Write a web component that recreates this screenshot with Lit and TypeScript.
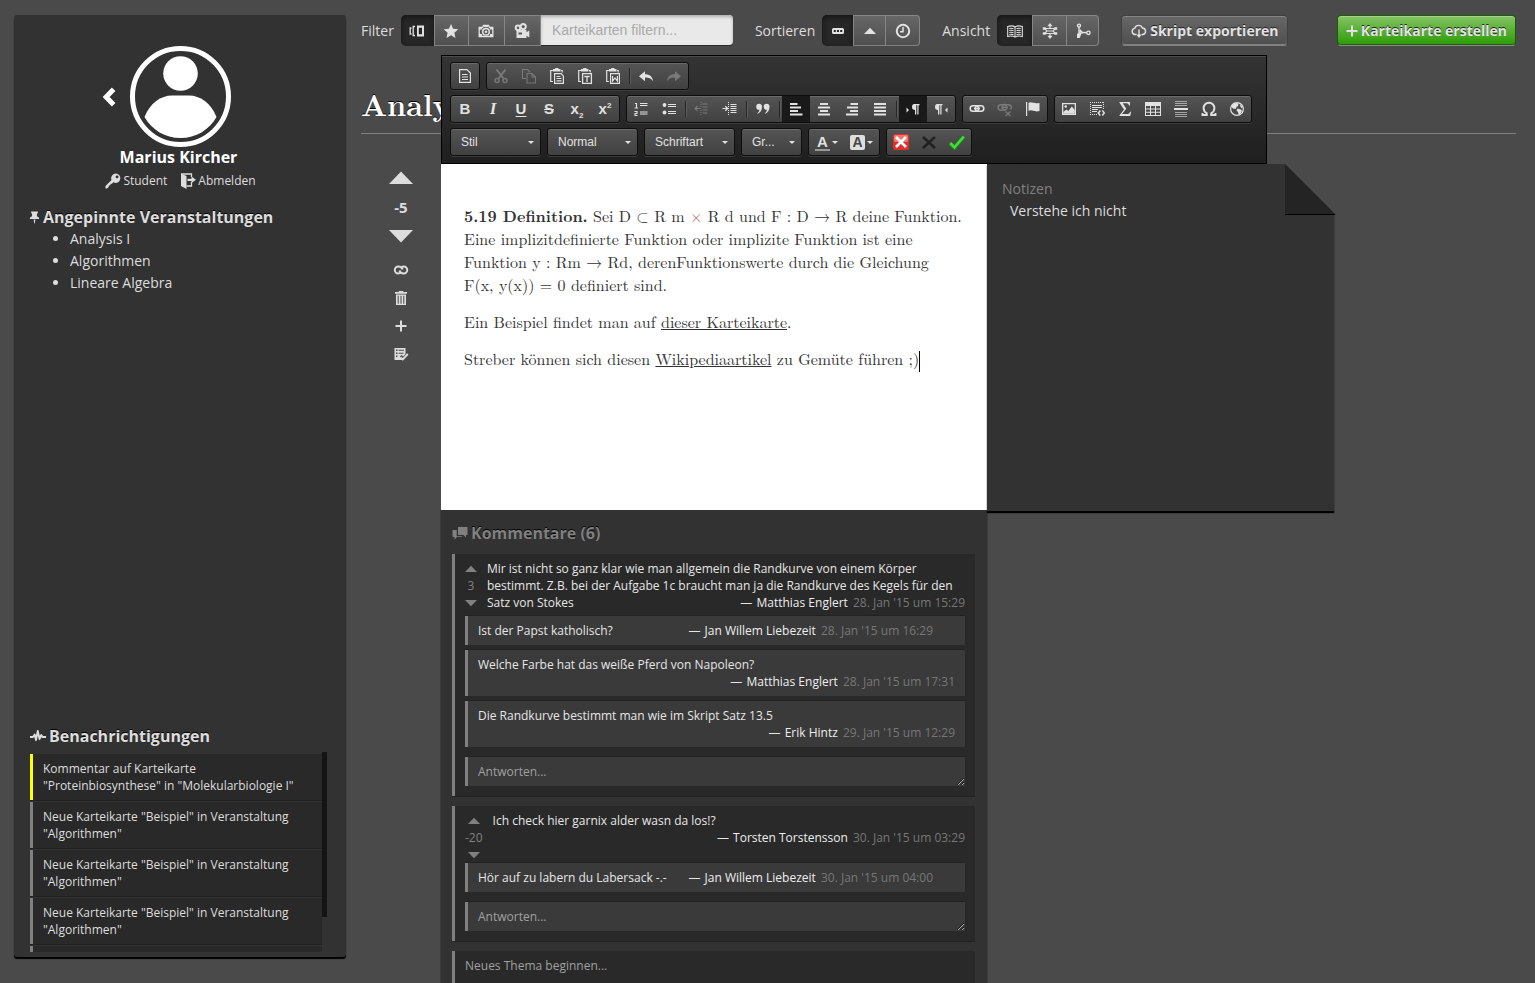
import { LitElement, html, svg, css, nothing } from "lit";
import { customElement, property } from "lit/decorators.js";
import { classMap } from "lit/directives/class-map.js";

const glyphs: Record<string, unknown> = {
  cards: svg`<path d="M8 2.500h7v11H8zM9.800 4.700v6.600h3.200V4.700z" fill-rule="evenodd" fill="currentColor"/><path d="M6 3.500H4.200v9H6M2.500 5H1.200v6h1.300" fill="none" stroke="currentColor" stroke-width="1.300"/>`,
  star: svg`<path fill="currentColor" d="M8 1l2.100 4.800 5.200.500-3.900 3.500 1.100 5.200L8 12.300 3.500 15l1.100-5.200L.700 6.300l5.200-.500z"/>`,
  camera: svg`<path fill="none" stroke="currentColor" stroke-width="1.300" d="M1.200 4.300h3.400l1-2h4.800l1 2h3.400v9.200H1.200z"/><path fill="currentColor" d="M1 4h3v2.500H1zM12 4h3v2.500h-3zM1 11h3v2.500H1zM12 11h3v2.500h-3zM5.800 2h4.400v2H5.800z"/><circle cx="8" cy="8.800" r="3.300" fill="none" stroke="currentColor" stroke-width="1.500"/><circle cx="8" cy="8.800" r="1.300" fill="currentColor"/>`,
  film: svg`<g fill="none" stroke="currentColor" stroke-width="1.900"><circle cx="4" cy="4.800" r="2.300"/><circle cx="9.200" cy="3.600" r="2.600"/></g><path fill="currentColor" fill-rule="evenodd" d="M2.500 7h10v2.200l2.800-1.700V14.500l-2.800-1.700V15h-10zM4.500 9.500v2H8v-2z"/>`,
  dots: svg`<path fill="currentColor" fill-rule="evenodd" d="M3.500 5h9A1.500 1.500 0 0 1 14 6.500v3a1.500 1.500 0 0 1-1.500 1.500h-9A1.500 1.500 0 0 1 2 9.500v-3A1.500 1.500 0 0 1 3.500 5zM3.800 7v2h2V7zM7 7v2h2V7zM10.200 7v2h2V7z"/>`,
  up: svg`<path fill="currentColor" d="M8 4.800L14 11H2z"/>`,
  down: svg`<path fill="currentColor" d="M2 5h12l-6 6.200z"/>`,
  clock: svg`<circle cx="8" cy="8" r="6.200" fill="none" stroke="currentColor" stroke-width="2"/><path d="M8 4v4.700H5" fill="none" stroke="currentColor" stroke-width="1.500"/>`,
  book: svg`<path fill="none" stroke="currentColor" stroke-width="1.100" d="M8 4C6.500 2.800 3 2.800.700 3.500v10c2.500-.700 5.500-.500 7.300.600 1.800-1.100 4.800-1.300 7.300-.6v-10C13 2.800 9.500 2.800 8 4zM8 4v10M2.300 5.500c1.500-.300 3-.2 4.200.3M2.300 7.500c1.500-.3 3-.2 4.200.3M2.300 9.500c1.500-.3 3-.2 4.200.3M2.300 11.500c1.500-.3 3-.2 4.200.3M13.700 5.500c-1.500-.3-3-.2-4.200.3M13.700 7.500c-1.500-.3-3-.2-4.200.3M13.700 9.500c-1.500-.3-3-.2-4.200.3M13.700 11.500c-1.500-.3-3-.2-4.200.3"/>`,
  graph: svg`<g fill="none" stroke="currentColor" stroke-width="1.200"><path d="M8 2v3.500M8 10.500V14M2.500 5.500h11M2.500 10.500h11M3 5.700l1.800 2.300L3 10.300M13 5.700L11.200 8l1.800 2.300M4.800 8h6.400"/></g><path fill="currentColor" d="M8 0l2.600 3.200H5.400zM8 16l2.600-3.200H5.400zM.800 4.300h3v2.400h-3zM12.200 4.300h3v2.400h-3zM.800 9.300h3v2.400h-3zM12.200 9.300h3v2.400h-3z"/>`,
  branch: svg`<g fill="none" stroke="currentColor" stroke-width="1.400"><circle cx="4" cy="2.600" r="1.500"/><circle cx="13.400" cy="9.800" r="1.700"/><path d="M4 4v9M4.300 12.200C5 9 8 9.200 11.700 9.700"/></g><path fill="currentColor" d="M2 10.500h4.400L4.800 15H2zM5 6l3 3-4 1z"/>`,
  cloud: svg`<path fill="none" stroke="currentColor" stroke-width="1.400" d="M5.500 11.500H4A3.100 3.100 0 0 1 3.600 5.400 4.200 4.200 0 0 1 11.500 5 3.300 3.300 0 0 1 12 11.500h-1.500"/><path fill="currentColor" d="M7.300 6.500h1.400v5h2L8 15l-2.700-3.500h2z"/>`,
  plus: svg`<path fill="currentColor" d="M7 2.500h2V7h4.500v2H9v4.500H7V9H2.500V7H7z"/>`,
  chevron: svg`<path fill="none" stroke="currentColor" stroke-width="4" d="M12.500 1.800L6.500 8l6 6.200"/>`,
  key: svg`<path fill="currentColor" fill-rule="evenodd" d="M10.500.500a4.800 4.800 0 0 1 2.300 9 4.800 4.800 0 0 1-4.400-.2L7 10.700 5.500 11v1.300l-1.600.3-.2 1.400L2 15.500H.500V13l6-6A4.800 4.800 0 0 1 10.500.500zM12 2.500a1.400 1.400 0 1 0 .1 2.800A1.400 1.400 0 0 0 12 2.500z"/>`,
  exit: svg`<path fill="currentColor" d="M1 .500L6.500 3v13L1 13z"/><path fill="none" stroke="currentColor" stroke-width="1.300" d="M1 1h10.500v3M11.500 9v4H6.500"/><path fill="currentColor" d="M7.500 5.700h4V3.500L16 6.800l-4.500 3.300V8h-4z"/>`,
  pin: svg`<path fill="currentColor" d="M3.800.500h8.400v1.800L11 3.800v2.700c1.700.500 2.800 1.700 2.800 3.300H2.200c0-1.600 1.100-2.800 2.800-3.300V3.800L3.800 2.300zM7 10.500h2l-.600 5h-.8z"/>`,
  pulse: svg`<path fill="none" stroke="currentColor" stroke-width="1.900" stroke-linejoin="round" d="M0 9h3l1.700-2.500L6 12 7.800 3l1.700 8 1.800-4 1.200 2H16"/>`,
  link: svg`<g fill="none" stroke="currentColor" stroke-width="2"><path d="M9.500 7.500C9 5.600 7.300 4.500 5.300 4.500A3.500 3.500 0 1 0 5.300 11.500c1 0 1.700-.300 2.400-.900M6.500 8.500c.500 1.900 2.200 3 4.200 3a3.500 3.500 0 1 0 0-7c-1 0-1.700.300-2.400.9"/></g>`,
  trash: svg`<path fill="currentColor" fill-rule="evenodd" d="M2 2h3.800V1h4.400v1H14v1.700H2zM3 4.500h10V15H3zM4.700 5.800v7.900h1V5.800zM7.500 5.800v7.900h1V5.800zM10.300 5.800v7.900h1V5.800z"/>`,
  review: svg`<path fill="currentColor" fill-rule="evenodd" d="M1.500 2h11v6l-2.300 2.500-1.700-1.400-1.700 1.700 3 3.200H1.500zM3 3.500V5h1.500V3.500zM3 6.500V8h1.500V6.500zM3 9.500V11h1.500V9.500zM5.500 3.700v1h5.500v-1zM5.500 6.700v1h5v-1z"/><path fill="none" stroke="currentColor" stroke-width="1.900" d="M7.500 11.300l2.300 2.200 5-5.500"/>`,
  chat: svg`<path fill="currentColor" d="M6 2h9.500v8h-1.500v2.500L11.500 10H6z"/><path fill="currentColor" d="M.500 5h4.200v6.300h5.500V12H5l-2.500 2.500V12h-2z"/>`,
  doc: svg`<path fill="none" stroke="currentColor" stroke-width="1.200" d="M2.600 1.600h7.300l3.500 3.500v9.300H2.600zM5 6.500h5.500M5 9h6M5 11.500h6"/>`,
  cut: svg`<g fill="none" stroke="currentColor"><path stroke-width="2" d="M3.500 1.500l7 9M12.500 1.500l-7 9"/><circle cx="4" cy="12.500" r="2" stroke-width="1.500"/><circle cx="12" cy="12.500" r="2" stroke-width="1.500"/></g>`,
  copy: svg`<g fill="none" stroke="currentColor" stroke-width="1.100"><path d="M5 10.500H1.500v-9h5l2.500 2.500M6 5.500h5l3.500 3.500v6H6zM11 5.500V9h3.500"/></g>`,
  paste: svg`<path d="M4 2.500H1.700v11H4M12 2.500h1.200v2" fill="none" stroke="currentColor" stroke-width="1.200"/><path fill="currentColor" d="M4 1h1.800l.700-1h2.600l.700 1h1.700v2.500H4z"/><path d="M5.600 5.600h6.500l2.300 2.300v7.500H5.600z" fill="none" stroke="currentColor" stroke-width="1.200"/><path d="M7.500 8.500h4M7.500 10.500h5M7.500 12.800h5" stroke="currentColor" stroke-width="1.200"/>`,
  pastetext: svg`<path d="M4 2.500H1.700v11H4M12 2.500h1.200v2" fill="none" stroke="currentColor" stroke-width="1.200"/><path fill="currentColor" d="M4 1h1.800l.700-1h2.600l.700 1h1.700v2.500H4z"/><path d="M5.600 5.600h8.800v9.800H5.600zM7.300 8.500h5.400M10 8.500V14" fill="none" stroke="currentColor" stroke-width="1.300"/>`,
  pasteword: svg`<path d="M4 2.500H1.700v11H4M12 2.500h1.200v2" fill="none" stroke="currentColor" stroke-width="1.200"/><path fill="currentColor" d="M4 1h1.800l.700-1h2.600l.700 1h1.700v2.500H4z"/><path d="M5.600 5.600h8.800v9.800H5.600zM7.600 8v5l2.400-3 2.400 3V8" fill="none" stroke="currentColor" stroke-width="1.200"/>`,
  undo: svg`<path fill="currentColor" d="M1 8.200l6-5v3c5 0 7.500 2.300 8 7-1.700-2.600-4-3.600-8-3.600v3.600z"/>`,
  redo: svg`<path fill="currentColor" d="M15 8.200l-6-5v3c-5 0-7.500 2.300-8 7 1.700-2.600 4-3.600 8-3.600v3.600z"/>`,
  ol: svg`<path d="M7 2.500h7.500M7 4.500h7.500M7 11h7.500M7 13h7.500M2 2.500h1.500V7M1.500 7H5M1.500 10.500H4v2H2v2h2.500" fill="none" stroke="currentColor" stroke-width="1.100"/>`,
  ul: svg`<circle cx="3.500" cy="4" r="1.900" fill="currentColor"/><circle cx="3.500" cy="11.500" r="1.900" fill="currentColor"/><path d="M7 3.500h8M7 5.500h8M7 10.500h8M7 12.500h8" stroke="currentColor" stroke-width="1.100"/>`,
  outdent: svg`<path d="M8.500 3h5M8.500 6h5M8.500 9h5M8.500 12h5M1 7.500h5M3.500 5.200L1 7.500l2.500 2.300" fill="none" stroke="currentColor" stroke-width="1.200"/><path d="M7 1v13" stroke="currentColor" stroke-dasharray="1 1"/>`,
  indent: svg`<path d="M8.500 3.500h6M8.500 5.500h6M8.500 7.500h6M8.500 9.500h6M8.500 11.500h6M.500 7.500h5M3.300 5.200l2.400 2.300-2.400 2.300" fill="none" stroke="currentColor" stroke-width="1.200"/><path d="M6.500 1v14" stroke="currentColor" stroke-dasharray="1 1"/>`,
  quote: svg`<path fill="currentColor" d="M4 2.800a3 3 0 0 1 3 3.200c0 3.500-2 6-5 7 1.500-1.500 2.300-2.800 2.400-4.200A3 3 0 0 1 4 2.800zM11.500 2.800a3 3 0 0 1 3 3.200c0 3.500-2 6-5 7 1.500-1.500 2.300-2.800 2.400-4.200a3 3 0 0 1-.4-6z"/>`,
  left: svg`<path d="M2 3h7.500M2 6.500h11M2 10h8M2 13.500h12.500" stroke="currentColor" stroke-width="2"/>`,
  center: svg`<path d="M4 3h8M2 6.500h12M4 10h8M2 13.500h12" stroke="currentColor" stroke-width="2"/>`,
  right: svg`<path d="M6.500 3H14M3 6.500h11M6 10h8M2 13.500h12" stroke="currentColor" stroke-width="2"/>`,
  justify: svg`<path d="M2 3h12M2 6.500h12M2 10h12M2 13.500h12" stroke="currentColor" stroke-width="2"/>`,
  ltr: svg`<path fill="currentColor" d="M1.500 6.500v5L4 9zM8.500 3h6v1.200h-1V13.500h-1.200V4.200h-1V13.500H10V9C8 9 7 7.800 7 6s1-3 2-3z"/>`,
  rtl: svg`<path fill="currentColor" d="M14.500 6.500v5L12 9zM3.500 3h6v1.200h-1V13.500H7.300V4.200h-1V13.500H5V9C3 9 2 7.800 2 6s1-3 2-3z"/>`,
  chain: svg`<g fill="none" stroke="currentColor" stroke-width="1.600"><rect x="1.200" y="4.800" width="8.500" height="5.400" rx="2.700"/><rect x="6.300" y="4.800" width="8.500" height="5.400" rx="2.700"/></g><path d="M5 7.500h6" stroke="currentColor" stroke-width="1.500"/>`,
  unchain: svg`<g fill="none" stroke="currentColor" stroke-width="1.500"><rect x="1.200" y="3.800" width="8.500" height="5.400" rx="2.700"/><path d="M7 9A2.700 2.700 0 0 1 9 3.800h3a2.700 2.700 0 0 1 1.500 4.700M5 6.500h6M8.500 10.500l5 4.500M13.500 10.500l-5 4.500"/></g>`,
  flag: svg`<path fill="currentColor" d="M1 1h1.200v14H1zM3.500 2c3-2 5.500 1.300 11 0v8c-5.500 1.500-8-2-11 0z"/>`,
  image: svg`<path fill="currentColor" fill-rule="evenodd" d="M1 2h14v12H1zM2.300 3.300v9.400h11.400V3.300z"/><circle cx="4.700" cy="5.500" r="1.300" fill="currentColor"/><path fill="currentColor" d="M2.300 12.700V11l3-2.500 2 1.500 3.500-4.500 2.900 3.500v3.700z"/>`,
  embed: svg`<path fill="none" stroke="currentColor" stroke-dasharray="1 1" d="M1.500 1v13M1 1.500h14M14.500 1v7M1 13.500h8"/><path d="M3 4.500h10M3 6.500h10M3 8.500h6M3 10.500h5" stroke="currentColor" stroke-width="1.200"/><path fill="none" stroke="currentColor" stroke-width="1.500" d="M11.300 9.500L9.300 12l2 2.500M13.300 9.500l2 2.500-2 2.500"/>`,
  sigma: svg`<path fill="currentColor" d="M2.500 1h10.500v3.500h-1C11.500 3 11 2.300 9.500 2.300H5.700L9.300 7.800l-4.300 5.200h5.500c1.500 0 2-.7 2.600-2.200h1L13.200 15H2.500v-.8L7 8.500 2.500 1.700z"/>`,
  table: svg`<path fill="currentColor" fill-rule="evenodd" d="M0 1h16v14H0zM1 5v2.500h4V5zM6 5v2.500h4V5zM11 5v2.500h4V5zM1 8.500v2.200h4V8.500zM6 8.500v2.200h4V8.500zM11 8.500v2.200h4V8.500zM1 11.700V14h4v-2.300zM6 11.700V14h4v-2.300zM11 11.700V14h4v-2.300z"/>`,
  hr: svg`<path d="M2 .500h12M2 2.500h12M2 4.500h12M2 11.500h12M2 13.500h12M2 15.500h12" stroke="currentColor" opacity=".6"/><path d="M1 8h14" stroke="currentColor" stroke-width="2"/>`,
  omega: svg`<path fill="none" stroke="currentColor" stroke-width="1.900" d="M1.500 12v2h4.300v-1.700C3.500 11 2.600 9.300 2.600 7A5.200 5.200 0 0 1 8 1.800 5.200 5.200 0 0 1 13.400 7c0 2.300-.9 4-3.200 5.300V14h4.300v-2"/>`,
  globe: svg`<circle cx="8" cy="8" r="6.400" fill="none" stroke="currentColor" stroke-width="1.200"/><path fill="currentColor" d="M3 4l3.500-2 3 .500L9 5 7.500 6l-1 2L4 7.500 2.500 6zM8.500 7.500L12 8.500 13 10l-2 3-1.500.8L9 11 7.500 9.500zM11 3.500l2.500 2v2L11.500 6z"/>`,
  cancel: svg`<rect width="16" height="16" rx="2" fill="#e02f2a"/><rect x="1" y="1" width="14" height="7" rx="1" fill="#f0766f"/><path d="M3 3l10 10M13 3L3 13" stroke="#fff" stroke-width="2.600"/>`,
  close: svg`<path d="M2 3l12 11M14 3L2 14" stroke="#202020" stroke-width="2.400"/>`,
  check: svg`<path d="M1.200 9.500l4.300 4.300L14.800 3" fill="none" stroke="#168a16" stroke-width="4"/><path d="M1.200 9l4.300 4.300L14.800 2.500" fill="none" stroke="#43dc36" stroke-width="2.600"/>`,
};

const icon = (name: string, cls = "") =>
  html`<svg class="icon ${cls}" viewBox="0 0 16 16" aria-hidden="true">${glyphs[name]}</svg>`;

const shared = css`
  * { box-sizing: border-box; }
  .icon { width: 16px; height: 16px; display: block; flex: none; }
  button { font: inherit; color: inherit; border: 0; padding: 0; background: none; cursor: pointer; }
  a { color: inherit; }
  h1, h2, p, ul { margin: 0; padding: 0; }
`;

type Tool = { icon?: string; text?: string; cls?: string; label: string; on?: boolean; off?: boolean } | "|";
const t = (icon: string, label: string, more = {}): Tool => ({ icon, label, ...more });
const x = (text: string, cls: string, label: string): Tool => ({ text, cls, label });

@customElement("editor-toolbar")
class EditorToolbar extends LitElement {
  static styles = [shared, css`
    :host {
      display: flex; flex-direction: column; gap: 5px; width: max-content;
      padding: 6px 14px 7px 8px; border: 1px solid #000;
      background: linear-gradient(#343434, #1f1f1f); box-shadow: inset 0 1px 0 #4c4c4c;
      color: #e2e2e2; font: 12px/26px "Liberation Sans", Arial, sans-serif;
    }
    .row { display: flex; gap: 6px; }
    .group, .combo {
      display: flex; height: 28px; border: 1px solid #0e0e0e; border-radius: 3px;
      background: linear-gradient(#545454, #414141); box-shadow: inset 0 1px 0 #6a6a6a, 0 1px 0 #3c3c3c;
    }
    .tool { width: 28px; height: 26px; display: flex; align-items: center; justify-content: center; }
    .tool.on { background: #191919; }
    .tool.off { opacity: .3; }
    .tool.drop { width: 35px; gap: 2px; }
    .caret { border: 3px solid transparent; border-top-color: currentColor; border-bottom: 0; }
    .line { width: 1px; margin: 5px 2px; background: #262626; box-shadow: 1px 0 0 #5c5c5c; }
    .bold, .italic, .under, .strike, .sub, .sup { font: bold 15px/26px "Liberation Sans", Arial, sans-serif; }
    .italic { font: italic bold 17px/26px "Liberation Serif", serif; }
    .under { text-decoration: underline; text-underline-offset: 2px; }
    .strike { text-decoration: line-through; }
    .sub sub, .sup sup { font-size: 8px; line-height: 0; }
    .ink { font-weight: bold; font-size: 15px; line-height: 15px; border-bottom: 2px solid #999; padding: 0 2px; }
    .fill { font-weight: bold; font-size: 14px; line-height: 15px; color: #444; background: #dedede; border-radius: 2px; padding: 0 2px; }
    select {
      appearance: none; font: inherit; color: inherit; width: 91px; padding: 0 20px 0 10px; outline: 0;
    }
    .pick { position: relative; display: flex; }
    .pick .caret { position: absolute; right: 7px; top: 13px; pointer-events: none; }
    .narrow { width: 61px; }
  `];

  rows: Tool[][][] = [
    [
      [t("doc", "Vorlagen")],
      [t("cut", "Ausschneiden", { off: true }), t("copy", "Kopieren", { off: true }), t("paste", "Einfügen"), t("pastetext", "Als Text einfügen"), t("pasteword", "Aus Word einfügen"), "|", t("undo", "Rückgängig"), t("redo", "Wiederherstellen", { off: true })],
    ],
    [
      [x("B", "bold", "Fett"), x("I", "italic", "Kursiv"), x("U", "under", "Unterstrichen"), x("S", "strike", "Durchgestrichen"), x("x", "sub", "Tiefgestellt"), x("x", "sup", "Hochgestellt")],
      [t("ol", "Nummerierte Liste"), t("ul", "Liste"), "|", t("outdent", "Einzug verringern", { off: true }), t("indent", "Einzug erhöhen"), "|", t("quote", "Zitatblock"), "|",
        t("left", "Linksbündig", { on: true }), t("center", "Zentriert"), t("right", "Rechtsbündig"), t("justify", "Blocksatz"), "|", t("ltr", "Leserichtung links nach rechts", { on: true }), t("rtl", "Leserichtung rechts nach links")],
      [t("chain", "Link"), t("unchain", "Link entfernen", { off: true }), t("flag", "Anker")],
      [t("image", "Bild"), t("embed", "Platzhalter"), t("sigma", "Formel"), t("table", "Tabelle"), t("hr", "Horizontale Linie"), t("omega", "Sonderzeichen"), t("globe", "IFrame")],
    ],
  ];

  tool(b: Tool) {
    if (b === "|") return html`<span class="line"></span>`;
    return html`<button type="button" class=${classMap({ tool: true, on: !!b.on, off: !!b.off })} aria-label=${b.label} ?disabled=${b.off}>
      ${b.icon ? icon(b.icon) : html`<span class=${b.cls!}>${b.text}${b.cls === "sub" ? html`<sub>2</sub>` : b.cls === "sup" ? html`<sup>2</sup>` : nothing}</span>`}
    </button>`;
  }

  combo(value: string, label: string, narrow = false) {
    return html`<span class="pick"><select class="combo ${narrow ? "narrow" : ""}" aria-label=${label}><option>${value}</option></select><span class="caret"></span></span>`;
  }

  render() {
    return html`
      ${this.rows.map((r) => html`<div class="row">${r.map((g) => html`<div class="group">${g.map((b) => this.tool(b))}</div>`)}</div>`)}
      <div class="row">
        ${this.combo("Stil", "Stil")}${this.combo("Normal", "Format")}${this.combo("Schriftart", "Schriftart")}${this.combo("Gr...", "Größe", true)}
        <div class="group">
          <button type="button" class="tool drop" aria-label="Textfarbe"><span class="ink">A</span><span class="caret"></span></button>
          <button type="button" class="tool drop" aria-label="Hintergrundfarbe"><span class="fill">A</span><span class="caret"></span></button>
        </div>
        <div class="group">
          ${[["cancel", "Abbrechen"], ["close", "Schließen"], ["check", "Speichern"]].map(([n, l]) => html`<button type="button" class="tool" aria-label=${l}>${icon(n)}</button>`)}
        </div>
      </div>`;
  }
}

type Post = { text: string; author: string; date: string; own?: boolean };
type Thread = Post & { votes: number; replies: Post[] };

@customElement("comment-thread")
class CommentThread extends LitElement {
  @property({ attribute: false }) thread!: Thread;

  static styles = [shared, css`
    :host {
      display: block; border-left: 3px solid #808080; background: #292929; padding: 6px 10px 10px;
      box-shadow: 0 1px 0 #222; font: 12px/17px "Open Sans", sans-serif; color: #e6e6e6;
    }
    .head { display: flex; gap: 10px; }
    .vote { display: flex; flex-direction: column; align-items: center; margin-bottom: -5px; color: #808080; }
    .vote button { height: 17px; display: flex; align-items: center; margin: 0 -2px; }
    .body { flex: 1; min-width: 0; display: flow-root; }
    .by { float: right; margin-left: 12px; color: #777; }
    .name { color: #eee; margin: 0 2px 0 1px; }
    .dash { color: #e6e6e6; }
    .reply { display: flow-root; margin-top: 5px; padding: 6px 10px; border-left: 3px solid #808080; background: #3a3a3a; box-shadow: 0 -1px 0 #222; }
    .own .by { margin-right: 22px; }
    textarea {
      display: block; width: 100%; height: 29px; margin-top: 10px; padding: 6px 10px; border: 0; border-left: 3px solid #808080;
      background: #3a3a3a; box-shadow: 0 -1px 0 #222; color: #e6e6e6; font: inherit; outline: 0; overflow: hidden; border-radius: 0;
    }
    textarea::placeholder { color: #a0a0a0; opacity: 1; }
  `];

  by = (p: Post) => html`<span class="by"><span class="dash">—</span> <span class="name">${p.author}</span> ${p.date}</span>`;

  render() {
    const c = this.thread;
    return html`
      <div class="head">
        <div class="vote">
          <button type="button" aria-label="Hoch">${icon("up")}</button><span>${c.votes}</span><button type="button" aria-label="Runter">${icon("down")}</button>
        </div>
        <div class="body">${c.text} ${this.by(c)}</div>
      </div>
      ${c.replies.map((r) => html`<div class=${classMap({ reply: true, own: !!r.own })}>${r.text} ${this.by(r)}</div>`)}
      <textarea placeholder="Antworten..." aria-label="Antworten"></textarea>`;
  }
}

const threads: Thread[] = [
  {
    votes: 3, text: "Mir ist nicht so ganz klar wie man allgemein die Randkurve von einem Körper bestimmt. Z.B. bei der Aufgabe 1c braucht man ja die Randkurve des Kegels für den Satz von Stokes",
    author: "Matthias Englert", date: "28. Jan '15 um 15:29",
    replies: [
      { text: "Ist der Papst katholisch?", author: "Jan Willem Liebezeit", date: "28. Jan '15 um 16:29", own: true },
      { text: "Welche Farbe hat das weiße Pferd von Napoleon?", author: "Matthias Englert", date: "28. Jan '15 um 17:31" },
      { text: "Die Randkurve bestimmt man wie im Skript Satz 13.5", author: "Erik Hintz", date: "29. Jan '15 um 12:29" },
    ],
  },
  {
    votes: -20, text: "Ich check hier garnix alder wasn da los!?", author: "Torsten Torstensson", date: "30. Jan '15 um 03:29",
    replies: [{ text: "Hör auf zu labern du Labersack -.-", author: "Jan Willem Liebezeit", date: "30. Jan '15 um 04:00", own: true }],
  },
];

@customElement("app-root")
class AppRoot extends LitElement {
  static styles = [shared, css`
    :host {
      box-sizing: border-box; display: flex; gap: 15px; height: 100vh; padding: 15px 19px 0 14px; overflow: hidden; background: #4a4a4a;
      color: #ddd; font: 14px/22px "Open Sans", sans-serif;
    }
    .side {
      flex: none; width: 332px; margin-bottom: 26px; padding: 31px 15px 5px 16px; display: flex; flex-direction: column;
      background: #323232; border-radius: 3px; box-shadow: 0 2px 1px #000;
    }
    .profile { display: grid; grid-template-columns: 1fr auto 1fr; align-items: center; column-gap: 12px; }
    .back { justify-self: end; color: #fff; }
    .back .icon { width: 20px; height: 20px; }
    .avatar { width: 101px; height: 101px; display: block; }
    .user { text-align: center; color: #fff; font-weight: bold; font-size: 16px; line-height: 20px; padding-right: 4px; }
    .links { display: flex; justify-content: center; gap: 13px; margin: 4px 0 14px; font-size: 12px; line-height: 20px; }
    .links a { display: flex; align-items: center; gap: 2px; text-decoration: none; }
    h2 { display: flex; align-items: center; font-size: 16px; line-height: 24px; text-shadow: 0 -1px 0 #000; }
    .pinned .icon { width: 13px; height: 15px; margin-left: -2px; margin-right: 2px; }
    .courses { padding-left: 40px; flex: 1; margin-top: -1px; }
    .courses a { text-decoration: none; }
    .news { gap: 3px; }
    .feed { height: 200px; margin: 4px 4px 0 0; overflow: hidden; display: flex; }
    .items { flex: 1; padding-top: 2px; display: flex; flex-direction: column; gap: 2px; }
    .thumb { width: 5px; height: 165px; background: #141414; }
    .item {
      flex: none; padding: 6px 10px; border-left: 3px solid #808080; background: #292929; box-shadow: 0 1px 0 #222;
      font-size: 12px; line-height: 17px;
    }
    .item.fresh { border-left-color: #ff0; }

    main { flex: 1; min-width: 0; }
    .bar { display: flex; align-items: center; height: 31px; }
    .label { margin-right: 7px; }
    .set { display: flex; height: 31px; margin-right: 22px; }
    .set button, .action {
      display: flex; align-items: center; justify-content: center; width: 34px; height: 31px; color: #e2e2e2;
      background: linear-gradient(#676767, #4f4f4f); box-shadow: inset 0 1px 0 #858585, inset 0 -1px 0 #808080;
      border-right: 1px solid #868686;
    }
    .set .on { background: #272727; box-shadow: inset 0 2px 5px #151515; border-radius: 5px 0 0 5px; }
    .set .slim { width: 32px; }
    .set .wide { width: 36px; }
    .set > button:last-child { border-radius: 0 4px 4px 0; }
    .search {
      width: 192px; height: 30px; border: 0; border-radius: 0 4px 4px 0; padding: 0 11px; background: #e9e9e9; outline: 0;
      box-shadow: inset 0 2px 3px #b0b0b0, 0 1px 0 #2c2c2c; font: 14px "Liberation Sans", Arial, sans-serif; color: #333;
    }
    .search::placeholder { color: #a9a9a9; opacity: 1; }
    .action { width: auto; padding: 0 9px; gap: 3px; border: 1px solid #404040; border-bottom-color: #808080; border-radius: 4px; font-weight: bold; text-shadow: 0 -1px 0 #222; }
    .create {
      margin-left: auto; padding: 0 8px 0 6px; gap: 1px; background: linear-gradient(#86c465, #2a9b05); border-color: #1c5c07; border-bottom-color: #888;
      box-shadow: inset 0 1px 0 #a4d48b, inset 0 -1px 0 #1c6405;
    }
    h1 {
      height: 88px; padding-top: 36px; border-bottom: 1px solid #808080; color: #fff; text-shadow: 0 -1px 0 #000;
      font: bold 30px/44px "Latin Modern Roman", "CMU Serif", "Liberation Serif", serif;
    }
    .board { display: grid; grid-template-columns: 80px 546fr 347fr 182fr; align-items: start; margin-top: 30px; }
    .rate { display: flex; flex-direction: column; align-items: center; padding-top: 7px; color: #ddd; }
    .rate .big { width: 32px; height: 32px; margin: -9px 0; }
    .score { font-weight: bold; font-size: 15px; line-height: 44px; }
    .rate .tools { display: flex; flex-direction: column; gap: 12px; margin-top: 19px; }
    .card { position: relative; }
    editor-toolbar { position: absolute; left: 0; bottom: 100%; z-index: 2; }
    .text {
      min-height: 346px; padding: 40px 23px; background: #fff; color: #333; outline: 0;
      font: 16px/23px "Latin Modern Roman", "CMU Serif", "Latin Modern Math", "Liberation Serif", serif;
    }
    .text p + p { margin-top: 14px; }
    .times { color: #b5655a; }
    .cursor { display: inline-block; width: 1px; height: 21px; margin: -2px 0; background: #000; vertical-align: -5px; }
    .comments { background: #323232; padding: 11px 12px 20px 11px; display: flex; flex-direction: column; gap: 10px; box-shadow: 1px 0 0 #3c3c3c, -1px 0 0 #3c3c3c; }
    .comments h2 { color: #808080; gap: 3px; margin-bottom: -1px; }
    .topic {
      display: block; width: 100%; height: 46px; padding: 6px 10px; border: 0; border-left: 3px solid #808080; border-radius: 0; resize: none;
      background: #292929; color: #e6e6e6; font: 12px/17px "Open Sans", sans-serif; outline: 0;
    }
    .topic::placeholder { color: #a0a0a0; opacity: 1; }
    .notes { position: relative; min-height: 347px; padding: 14px 15px; background: #323232; box-shadow: 0 2px 1px #000; }
    .notes label { display: block; color: #808080; }
    .notes textarea { display: block; width: 80%; height: 200px; padding: 0 8px; border: 0; background: none; color: #ddd; font: inherit; resize: none; outline: 0; }
    .fold { position: absolute; top: 0; right: -1px; width: 50px; height: 51px; }
  `];

  render() {
    const fresh = 'Neue Karteikarte "Beispiel" in Veranstaltung "Algorithmen"';
    const feed = ['Kommentar auf Karteikarte "Proteinbiosynthese" in "Molekularbiologie I"', fresh, fresh, fresh, ""];
    return html`
      <aside class="side">
        <div class="profile">
          <button type="button" class="back" aria-label="Zurück">${icon("chevron")}</button>
          <svg class="avatar" viewBox="0 0 101 101" aria-hidden="true">
            <circle cx="50.500" cy="50.500" r="48" fill="none" stroke="#fff" stroke-width="5"/>
            <circle cx="50.500" cy="27.500" r="17.300" fill="#fff"/>
            <path fill="#fff" d="M14.500 71C20 57 31 49.500 42 49.500h17c11 0 22 7.500 27.500 21.500C79 84 66 92 50.500 92S22 84 14.500 71z"/>
          </svg>
        </div>
        <div class="user">Marius Kircher</div>
        <div class="links">
          <a href="#">${icon("key")}Student</a>
          <a href="#">${icon("exit")}Abmelden</a>
        </div>
        <h2 class="pinned">${icon("pin")}Angepinnte Veranstaltungen</h2>
        <ul class="courses">
          ${["Analysis I", "Algorithmen", "Lineare Algebra"].map((c) => html`<li><a href="#">${c}</a></li>`)}
        </ul>
        <h2 class="news">${icon("pulse")}Benachrichtigungen</h2>
        <div class="feed">
          <div class="items">${feed.map((f, i) => html`<div class="item ${i ? "" : "fresh"}">${f}</div>`)}</div>
          <div class="thumb"></div>
        </div>
      </aside>
      <main>
        <div class="bar">
          <label class="label" for="filter">Filter</label>
          <div class="set">
            <button type="button" class="on" aria-label="Alle">${icon("cards")}</button>
            <button type="button" aria-label="Favoriten">${icon("star")}</button>
            <button type="button" class="wide" aria-label="Bilder">${icon("camera")}</button>
            <button type="button" class="wide" aria-label="Videos">${icon("film")}</button>
            <input id="filter" class="search" type="text" placeholder="Karteikarten filtern...">
          </div>
          <span class="label">Sortieren</span>
          <div class="set">
            <button type="button" class="on slim" aria-label="Standard">${icon("dots")}</button>
            <button type="button" class="slim" aria-label="Bewertung">${icon("up")}</button>
            <button type="button" aria-label="Datum">${icon("clock")}</button>
          </div>
          <span class="label">Ansicht</span>
          <div class="set">
            <button type="button" class="on wide" aria-label="Skript">${icon("book")}</button>
            <button type="button" aria-label="Graph">${icon("graph")}</button>
            <button type="button" class="slim" aria-label="Verzweigung">${icon("branch")}</button>
          </div>
          <button type="button" class="action">${icon("cloud")}Skript exportieren</button>
          <button type="button" class="action create">${icon("plus")}Karteikarte erstellen</button>
        </div>
        <h1>Analysis I</h1>
        <div class="board">
          <div class="rate">
            <button type="button" aria-label="Hoch">${icon("up", "big")}</button>
            <span class="score">-5</span>
            <button type="button" aria-label="Runter">${icon("down", "big")}</button>
            <div class="tools">
              ${[["link", "Verlinken"], ["trash", "Löschen"], ["plus", "Hinzufügen"], ["review", "Bearbeiten"]].map(([n, l]) => html`<button type="button" aria-label=${l}>${icon(n)}</button>`)}
            </div>
          </div>
          <section class="card">
            <editor-toolbar></editor-toolbar>
            <div class="text" role="textbox" aria-label="Karteikarte">
              <p><b>5.19 Definition.</b> Sei D ⊂ R m <span class="times">×</span> R d und F : D → R deine Funktion.<br>Eine implizitdefinierte Funktion oder implizite Funktion ist eine<br>Funktion y : Rm → Rd, derenFunktionswerte durch die Gleichung<br>F(x, y(x)) = 0 definiert sind.</p>
              <p>Ein Beispiel findet man auf <a href="#">dieser Karteikarte</a>.</p>
              <p>Streber können sich diesen <a href="#">Wikipediaartikel</a> zu Gemüte führen ;)<span class="cursor"></span></p>
            </div>
            <div class="comments">
              <h2>${icon("chat")}Kommentare (6)</h2>
              ${threads.map((c) => html`<comment-thread .thread=${c}></comment-thread>`)}
              <textarea class="topic" placeholder="Neues Thema beginnen..." aria-label="Neues Thema"></textarea>
            </div>
          </section>
          <aside class="notes">
            <label for="notes">Notizen</label>
            <textarea id="notes" .value=${"Verstehe ich nicht"}></textarea>
            <svg class="fold" viewBox="0 0 50 51" aria-hidden="true"><path fill="#4a4a4a" d="M0 0h50v50z"/><path fill="#242424" d="M0 0v50h50z"/><path fill="#000" d="M0 50h50v1H0z"/></svg>
          </aside>
        </div>
      </main>`;
  }
}
